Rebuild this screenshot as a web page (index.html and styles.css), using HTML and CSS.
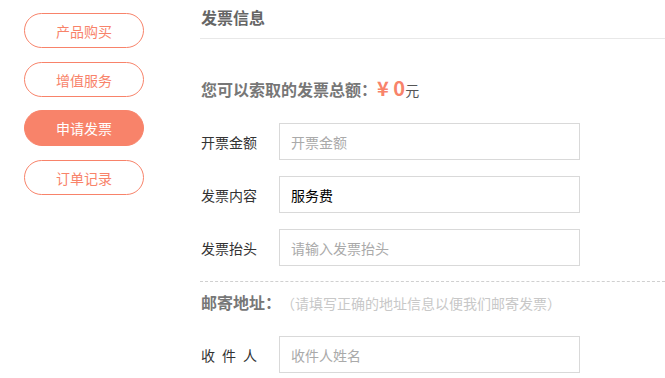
FILE: index.html
```html
<!DOCTYPE html>
<html lang="zh">
<head>
<meta charset="utf-8">
<title>发票信息</title>
<link rel="stylesheet" href="styles.css">
</head>
<body>
<div class="page">
  <nav class="side">
    <a class="nav-btn">产品购买</a>
    <a class="nav-btn">增值服务</a>
    <a class="nav-btn active">申请发票</a>
    <a class="nav-btn">订单记录</a>
  </nav>
  <main class="main">
    <div class="title">发票信息</div>
    <div class="total">您可以索取的发票总额<span class="colon">：</span><span class="amount">¥ 0</span><span class="unit">元</span></div>
    <div class="rows">
      <div class="row"><label class="label">开票金额</label><input class="field" placeholder="开票金额"></div>
      <div class="row"><label class="label">发票内容</label><input class="field" value="服务费"></div>
      <div class="row"><label class="label">发票抬头</label><input class="field" placeholder="请输入发票抬头"></div>
    </div>
    <div class="divider"></div>
    <div class="addr">邮寄地址<span class="colon">：</span><span class="hint"><span class="paren">（</span>请填写正确的地址信息以便我们邮寄发票<span class="paren">）</span></span></div>
    <div class="rows rows-addr">
      <div class="row"><label class="label spaced">收件人</label><input class="field" placeholder="收件人姓名"></div>
    </div>
  </main>
</div>
</body>
</html>
```
FILE: styles.css
```css
* { box-sizing: border-box; }
html, body { margin: 0; padding: 0; background: #fff; }
body {
  font-family: "Noto Sans CJK SC", "Noto Sans", sans-serif;
  font-size: 14px;
  color: #333;
  overflow: hidden;
}
.page {
  display: flex;
  align-items: flex-start;
}
.side {
  width: 200px;
  flex: none;
  display: flex;
  flex-direction: column;
  gap: 14px;
  padding: 13px 0 0 24px;
}
.nav-btn {
  display: flex;
  align-items: center;
  justify-content: center;
  width: 120px;
  height: 35px;
  border: 1px solid #f8836a;
  border-radius: 18px;
  color: #f8836a;
  font-size: 14px;
  line-height: 1;
}
.nav-btn.active {
  background: #f8836a;
  color: #fff;
  height: 36px;
  margin: -1px 0 0;
}
.main {
  flex: 1;
  min-width: 0;
}
.title {
  height: 39px;
  border-bottom: 1px solid #e8e8e8;
  padding-left: 1px;
  font-size: 16px;
  font-weight: bold;
  line-height: 34px;
  color: #666;
}
.total {
  margin-top: 37px;
  padding-left: 1px;
  height: 24px;
  line-height: 24px;
  font-size: 16px;
  font-weight: bold;
  color: #777;
}
.colon {
  display: inline-block;
  width: 16px;
  text-align: center;
}
.amount {
  font-size: 20px;
  color: #f8836a;
}
.unit {
  font-size: 14px;
  font-weight: normal;
  color: #555;
}
.rows {
  margin-top: 23px;
  display: flex;
  flex-direction: column;
  gap: 16px;
}
.row {
  display: flex;
  align-items: center;
  height: 37px;
}
.label {
  width: 79px;
  padding-left: 1px;
  font-size: 14px;
  color: #333;
}
.label.spaced { letter-spacing: 7px; }
.field {
  width: 301px;
  height: 37px;
  border: 1px solid #d9d9d9;
  padding: 0 11px;
  font-family: inherit;
  font-size: 14px;
  color: #000;
  outline: none;
  background: #fff;
}
.field::placeholder { color: #aaa; }
.divider {
  margin-top: 15px;
  border-top: 1px dashed #d0d0d0;
}
.addr {
  margin-top: 8px;
  padding-left: 1px;
  height: 24px;
  line-height: 24px;
  font-size: 16px;
  font-weight: bold;
  color: #777;
}
.hint {
  font-size: 14px;
  font-weight: normal;
  color: #c8c8c8;
}
.paren {
  display: inline-block;
  width: 14px;
  text-align: center;
}
.rows-addr { margin-top: 22px; }
```
